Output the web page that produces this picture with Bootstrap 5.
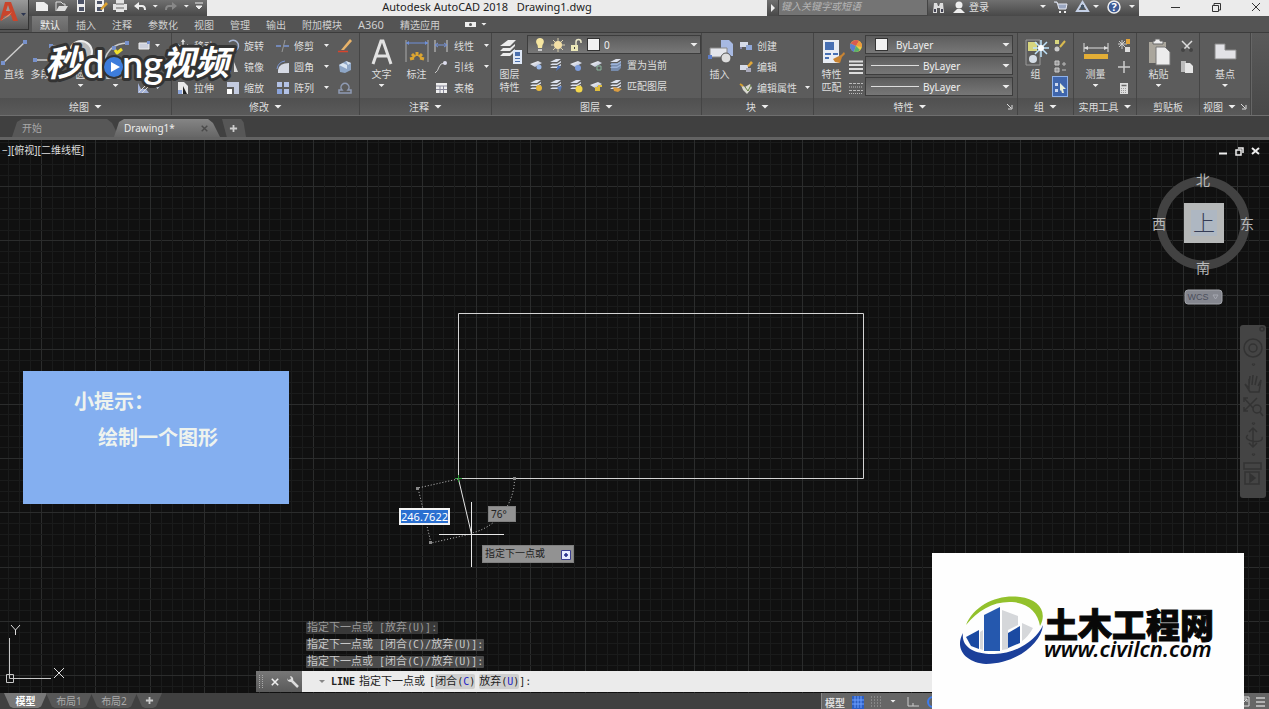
<!DOCTYPE html>
<html lang="zh-CN">
<head>
<meta charset="utf-8">
<meta name="viewport" content="width=device-width, initial-scale=1">
<title>Autodesk AutoCAD 2018 - Drawing1.dwg</title>
<link href="https://cdn.jsdelivr.net/npm/bootstrap@5.3.0/dist/css/bootstrap.min.css" rel="stylesheet">
<style>
  body { font: 10px/16px "Noto Sans", "Noto Sans CJK SC", sans-serif; color: #dedede; background: #404040; overflow: hidden; }
  button, input, select { font: inherit; color: inherit; background: none; border: 0; padding: 0; }
  select { appearance: none; }
  svg { display: block; flex: none; overflow: visible; }
  .ic { width: 14px; height: 14px; }
  .caret { width: 6px; height: 3px; flex: none; background: #eee; clip-path: polygon(0 0, 100% 0, 50% 100%); }
  .caret-lg { width: 8px; height: 4px; }

  /* title bar */
  .chrome { height: 16px; }
  .dark-bar { background: linear-gradient(#707070, #484848); }
  .light-bar { background: #ebebeb; color: #222; }
  .app-title { font-size: 11px; line-height: 13px; white-space: pre; }
  .app-btn { left: 0; top: 0; width: 29px; height: 30px; background: linear-gradient(#9a9a9a, #565656); border: 1px solid #333; border-width: 0 1px 1px 0; z-index: 2; }
  .quick { width: 207px; padding: 0 4px 4px 35px; justify-content: space-between; }
  .search-box { width: 150px; height: 16px; background: #747474; border: 1px solid #444; border-top: 0; padding-left: 2px; }
  .search-box input { font-style: italic; line-height: 12px; height: 12px; width: 100%; display: block; }
  .search-box input::placeholder { color: #b4b4b4; opacity: 1; }
  .account { width: 211px; padding-bottom: 3px; }
  .winctl { width: 130px; padding-bottom: 3px; }

  /* menu */
  .menu { height: 17px; background: #545454; padding-left: 32px; border-bottom: 1px solid #3c3c3c; }
  .menu a { color: #cfcfcf; text-decoration: none; padding: 0 8px; height: 16px; line-height: 18px; }
  .menu a.on { color: #f2f2f2; background: linear-gradient(#7a7a7a, #666); }
  .menu a.latin { font-size: 11px; }

  /* ribbon */
  .ribbon { height: 82px; background: linear-gradient(#5a5a5a, #484848); }
  .pane { border-right: 1px solid #454545; box-shadow: 1px 0 #666; background: #5c5c5c; }
  .pane-body { height: 65px; padding-top: 2px; }
  .pane-name { height: 17px; background: linear-gradient(#505050, #5a5a5a); gap: 5px; line-height: 16px; }
  .big { width: 35px; height: 60px; padding-top: 3px; line-height: 13px; }
  .big svg { margin-bottom: 2px; width: 28px; height: 28px; }
  .big .caret { margin-top: 3px; }
  .big-first { width: 28px; }
  .stack-sm { width: 50px; } .stack-md { width: 60px; } .stack-ic { width: 16px; }
  .inset { padding-left: 2px; }
  .tool { height: 21px; gap: 4px; white-space: nowrap; }
  .tool .caret { margin-left: 6px; width: 5px; }
  .icons { height: 21px; gap: 6px; padding-left: 2px; }
  .combo { height: 19px; border: 1px solid #3d3d3d; background: linear-gradient(#5d5d5d, #777); padding: 0 2px 0 5px; gap: 4px; color: #f0f0f0; }
  .combo-gap { gap: 2px; }
  .chip { width: 13px; height: 13px; background: #f2f2f2; border: 1px solid #333; flex: none; }
  .rule { width: 48px; height: 1px; background: #ddd; flex: none; }
  .w-draw { width: 172px; } .w-mod { width: 188px; } .w-ann { width: 132px; } .w-lay { width: 210px; }
  .w-blk { width: 112px; } .w-prop { width: 204px; } .w-grp { width: 56px; } .w-util { width: 63px; } .w-view { width: 51px; }
  .picked { height: 19px; background: #3f66ad; outline: 1px solid #8fb2ea; }

  /* document tabs */
  .docs { height: 25px; background: #404040; border-top: 1px solid #6e6e6e; border-bottom: 3px solid #636363; padding: 3px 0 0 12px; }
  .doc { height: 18px; line-height: 18px; color: #a8a8a8; background: #575757; padding: 0 12px 0 10px; clip-path: polygon(0 100%, 5px 3px, 10px 0, calc(100% - 12px) 0, calc(100% - 7px) 4px, 100% 100%); }
  .doc.on { color: #eee; background: linear-gradient(#858585, #666); }
  .doc-a { width: 107px; } .doc-b { width: 106px; margin-left: -5px; } .doc-c { width: 24px; margin-left: 2px; padding: 0 7px; clip-path: polygon(0 0, 80% 0, 90% 20%, 100% 100%, 20% 100%); }

  /* drawing area */
  .stage { background: #101010; min-height: 0; }
  .board { left: 0; top: 0; width: 100%; height: 100%; overflow: hidden; }
  .viewlabel { left: 2px; top: 2px; line-height: 16px; }
  .viewctl { right: 9px; top: 7px; gap: 7px; }
  .cube { right: 13px; top: 31px; }
  .navbar-side { right: 3px; top: 185px; width: 26px; height: 173px; background: #444; border-radius: 3px; }
  .tip { left: 23px; top: 231px; width: 266px; height: 133px; background: #84aff0; color: #eef3ee; font-size: 20px; font-weight: 700; line-height: 36px; padding: 13px 0 0 51px; }
  .dyn { font-size: 10px; line-height: 14px; color: #222; background: #929292; border: 1px solid #808080; }
  .dyn-len { left: 399px; top: 368px; width: 51px; height: 17px; border: 2px solid #f4f4f4; background: #2a6fd0; color: #fff; font-size: 11px; line-height: 13px; }
  .dyn-ang { left: 488px; top: 366px; width: 28px; height: 16px; padding-left: 2px; }
  .dyn-msg { left: 482px; top: 405px; width: 92px; height: 18px; padding: 0 2px; }
  .log { left: 306px; bottom: 25px; font-family: "DejaVu Sans Mono", "Noto Sans CJK SC", monospace; gap: 5px; font-size: 11px; line-height: 12px; color: #c8c8c8; }
  .log div { background: #4b4b4b; padding: 0 1px; border-radius: 1px; white-space: pre; }
  .log div:first-child { color: #999; background: #383838; }
  .lat { font-size: 10px; }
  .cmd { left: 256px; right: 25px; bottom: 1px; height: 21px; background: #ebebeb; color: #222; font-family: "DejaVu Sans Mono", "Noto Sans CJK SC", monospace; font-size: 11px; line-height: 20px; }
  .cmd-grip { width: 46px; height: 21px; background: linear-gradient(#777, #5a5a5a); gap: 8px; padding-left: 3px; }
  .cmd .caret { background: #888; margin: 0 6px 0 17px; }
  .cmd button.opt { background: #cfcfcf; line-height: 15px; border-radius: 2px; }
  .cmd b { color: #2222c8; font-weight: 400; }

  /* status bar */
  .status { height: 16px; background: #404040; padding-left: 4px; overflow: hidden; }
  .lay { width: 46px; height: 15px; margin-right: -1px; line-height: 16px; background: #575757; color: #aaa; clip-path: polygon(0 0, 100% 0, calc(100% - 6px) 90%, calc(100% - 9px) 100%, 9px 100%, 6px 90%); }
  .lay.on { background: #787878; color: #fff; font-weight: 700; width: 43px; }
  .lay-add { width: 26px; }
  .state { width: 448px; background: #666; padding-left: 3px; gap: 7px; border-left: 1px solid #888; }

  /* overlays */
  .mark-video { left: 40px; top: 36px; z-index: 5; pointer-events: none; }
  .mark-site { right: 25px; bottom: 0; width: 312px; height: 156px; background: #fefefe; z-index: 5; }
</style>
</head>
<body class="vh-100 d-flex flex-column position-relative">

<svg width="0" height="0" class="position-absolute" aria-hidden="true">
  <defs>
    <linearGradient id="sh" x1="0" y1="0" x2="1" y2="1"><stop offset="0" stop-color="#fff"/><stop offset="1" stop-color="#aeb6cc"/></linearGradient>
    <symbol id="sheet" viewBox="0 0 14 14"><path d="M1 6L9 3L13 5L6 9Z" fill="url(#sh)"/></symbol>
    <symbol id="stack" viewBox="0 0 14 14"><path d="M1 4L7 1H12L8 4Z M1 7L3 5.500H8L12 3V4.500L8 7Z M1 10L3 8.500H8L12 6V7.500L8 10Z" fill="#dde2ee"/></symbol>
    <symbol id="plus" viewBox="0 0 10 10"><path d="M5 1V9M1 5H9" stroke="#ccc" stroke-width="2"/></symbol>
    <symbol id="cross" viewBox="0 0 10 10"><path d="M1 1L9 9M9 1L1 9" stroke="currentColor" stroke-width="2"/></symbol>
    <symbol id="bulb" viewBox="0 0 14 14"><path d="M7 0C3 0 2 4 4.500 7L5 10H9L9.500 7C12 4 11 0 7 0Z" fill="#f6e6a0"/><path d="M5 11H9V13H5Z" fill="#ccc"/></symbol>
    <symbol id="sun" viewBox="0 0 14 14"><path d="M7 0V14M0 7H14M2 2L12 12M12 2L2 12" stroke="#d8cfae"/><circle cx="7" cy="7" r="4" fill="#f3dfa6"/></symbol>
    <symbol id="lock" viewBox="0 0 14 14"><path d="M7 7V4A2.500 2.500 0 0 1 12 4V5" fill="none" stroke="#e9e6c8" stroke-width="1.500"/><path d="M2 7H9V13H2Z" fill="#ece8b8"/><path d="M5 9H6V11H5Z" fill="#444"/></symbol>
    <symbol id="launch" viewBox="0 0 6 6"><path d="M0 0L4 4M5 1V5H1" stroke="#ddd" fill="none"/></symbol>
  </defs>
</svg>

<!-- title bar -->
<header class="chrome d-flex flex-shrink-0">
  <button class="app-btn position-absolute" aria-label="应用程序菜单">
    <svg width="28" height="26" viewBox="0 0 28 26"><path d="M0 18L5 0H11L18 19H13L11 13L4 14L2 19Z" fill="#c9452c"/><path d="M6 9L8 3L10 9Z" fill="#999"/><path d="M0 19L12 10L9 14Z" fill="#f08a68"/><path d="M21 11H26L23.500 14Z" fill="#2c3550"/></svg>
  </button>
  <div class="quick dark-bar d-flex align-items-center">
    <button aria-label="新建"><svg class="ic" viewBox="0 0 14 14"><path d="M1 3H9L13 6V12H1Z" fill="#eee"/></svg></button>
    <button aria-label="打开"><svg class="ic" viewBox="0 0 14 14"><path d="M1 12V3H6L8 5H10V7" fill="none" stroke="#ddd"/><path d="M1 12L4 7H13L10 12Z" fill="#ddd"/></svg></button>
    <button aria-label="保存"><svg class="ic" viewBox="0 0 14 14"><path d="M3 1H11V13H3Z" fill="#eee"/><path d="M4 1H10V5H4ZM5 8H10V12H5Z" fill="#4c5368"/></svg></button>
    <button aria-label="另存为"><svg class="ic" viewBox="0 0 14 14"><path d="M1 1H10V13H1Z" fill="#eee"/><path d="M3 2H8V5H3ZM3 8H8V12H3Z" fill="#4c5368"/><path d="M6 10L12 3L14 5L8 11Z" fill="#d9a030"/></svg></button>
    <button aria-label="打印"><svg class="ic" viewBox="0 0 14 14"><path d="M3 1H11V5H14V11H11V13H3V11H0V5H3Z" fill="#e4e4e4"/><path d="M3 5H11M3 9H11" stroke="#666"/></svg></button>
    <button aria-label="放弃"><svg class="ic" viewBox="0 0 14 14"><path d="M2 7H9Q12 7 12 11" fill="none" stroke="#eee" stroke-width="2"/><path d="M1 7L6 3V11Z" fill="#eee"/></svg></button>
    <span class="caret"></span>
    <button aria-label="重做"><svg class="ic" viewBox="0 0 14 14"><path d="M12 7H5Q2 7 2 11" fill="none" stroke="#888" stroke-width="2"/><path d="M13 7L8 3V11Z" fill="#888"/></svg></button>
    <span class="caret"></span>
    <svg width="8" height="8" viewBox="0 0 8 8"><path d="M0 1H8M1 4H7L4 7Z" stroke="#eee" fill="#eee"/></svg>
  </div>
  <div class="light-bar app-title flex-grow-1 text-center">Autodesk AutoCAD 2018   Drawing1.dwg</div>
  <div class="dark-bar d-flex align-items-center ps-1"><svg width="7" height="8" viewBox="0 0 7 8"><path d="M0 0L4 4L0 8Z" fill="#eee"/></svg>
    <div class="search-box"><input type="text" aria-label="搜索" placeholder="键入关键字或短语"></div></div>
  <div class="account dark-bar d-flex align-items-center ps-1">
    <svg width="13" height="14" viewBox="0 0 13 14"><path d="M1 13L2 3H5L6 6H7L8 3H11L12 13H8V8H5V13Z" fill="#ddd"/><path d="M2 9H4V12H2ZM9 9H11V12H9Z" fill="#445"/></svg>
    <svg class="ms-2" width="12" height="14" viewBox="0 0 12 14"><circle cx="6" cy="5" r="3.500" fill="#eee"/><path d="M0 13L4 9H8L12 13Z" fill="#eee"/></svg>
    <button class="ms-1">登录</button>
    <span class="caret ms-auto"></span>
    <svg class="ms-2" width="14" height="14" viewBox="0 0 14 14"><path d="M0 2H3L5 9H12L13 4H4" fill="#9aa6c0" stroke="#e6e9f2"/><path d="M5 11H7V13H5ZM10 11H12V13H10Z" fill="#eee"/></svg>
    <svg class="ms-2" width="13" height="12" viewBox="0 0 13 12"><path d="M6.500 1L1 10H12Z" fill="none" stroke="#c4d0e6" stroke-width="2"/><path d="M5 4H8V8H5Z" fill="#456"/></svg>
    <span class="caret ms-1"></span>
    <svg class="ms-2" width="14" height="14" viewBox="0 0 14 14"><circle cx="7" cy="7" r="6" fill="#3c5a96" stroke="#eee" stroke-width="1.500"/><text x="7" y="11" font-size="11" font-weight="700" fill="#fff" text-anchor="middle">?</text></svg>
    <span class="caret ms-2 me-1"></span>
  </div>
  <div class="winctl light-bar d-flex align-items-center justify-content-between ps-4 pe-1">
    <button class="ps-2" aria-label="最小化"><svg width="10" height="10" viewBox="0 0 10 10"><path d="M0 5.500H9" stroke="#333"/></svg></button>
    <button aria-label="还原"><svg width="10" height="10" viewBox="0 0 10 10"><path d="M1.500 3.500H7.500V9.500H1.500ZM3 3V1.500H9.500V8H8" fill="none" stroke="#333"/></svg></button>
    <button class="pe-1" aria-label="关闭"><svg width="10" height="10" viewBox="0 0 10 10"><path d="M1 1L9 9M9 1L1 9" stroke="#333"/></svg></button>
  </div>
</header>

<nav class="menu d-flex flex-shrink-0 align-items-start">
  <a href="#" class="on">默认</a><a href="#">插入</a><a href="#">注释</a><a href="#">参数化</a><a href="#">视图</a><a href="#">管理</a><a href="#">输出</a><a href="#">附加模块</a><a href="#" class="latin">A360</a><a href="#">精选应用</a>
  <span class="d-flex align-items-center gap-1 ms-3 mt-1"><svg width="13" height="8" viewBox="0 0 13 8"><path d="M1 2H12V7H1Z" fill="#eee"/><circle cx="6.500" cy="4.500" r="1.500" fill="#555"/></svg><span class="caret"></span></span>
</nav>

<!-- ribbon -->
<section class="ribbon d-flex flex-shrink-0">
  <div class="pane w-draw">
    <div class="pane-body d-flex">
      <button class="big big-first d-flex flex-column align-items-center"><svg viewBox="0 0 28 28"><path d="M3 25L25 4" stroke="#ccc" stroke-width="1.500"/><path d="M1 23H5V27H1ZM23 2H27V6H23Z" fill="#7892cc"/></svg>直线</button>
      <button class="big d-flex flex-column align-items-center"><svg viewBox="0 0 28 28"><path d="M3 22H20L24 8H19" fill="none" stroke="#ccc" stroke-width="1.500"/><path d="M1 20H5V24H1ZM17 6H21V10H17Z" fill="#7892cc"/></svg>多段线</button>
      <button class="big d-flex flex-column align-items-center"><svg viewBox="0 0 28 28"><circle cx="14" cy="14" r="11" fill="#bbb" stroke="#eee" stroke-width="2"/></svg>圆<span class="caret"></span></button>
      <button class="big d-flex flex-column align-items-center"><svg viewBox="0 0 28 28"><path d="M2 24Q6 6 25 5" fill="none" stroke="#ccc" stroke-width="1.500"/><path d="M23 3H27V7H23ZM10 8H14V12H10Z" fill="#7892cc"/></svg>圆弧<span class="caret"></span></button>
      <div class="ms-1">
        <button class="tool d-flex align-items-center" aria-label="矩形"><svg class="ic" viewBox="0 0 14 14"><path d="M2 4H12V10H2Z" fill="#ccd0dd" stroke="#eee"/><path d="M10 2H13V5H10Z" fill="#7892cc"/></svg><span class="caret ms-0"></span></button>
        <button class="tool d-flex align-items-center" aria-label="椭圆"><svg class="ic" viewBox="0 0 14 14"><ellipse cx="7" cy="7" rx="6" ry="3" fill="none" stroke="#ddd"/></svg><span class="caret ms-0"></span></button>
        <button class="tool d-flex align-items-center" aria-label="图案填充"><svg class="ic" viewBox="0 0 14 14"><path d="M1 2V12H12L9 8H4Z" fill="#a3b2d8"/><path d="M2 11L9 4M5 12L12 5" stroke="#ddd"/></svg><span class="caret ms-0"></span></button>
      </div>
    </div>
    <div class="pane-name d-flex align-items-center justify-content-center">绘图<span class="caret caret-lg"></span></div>
  </div>
  <div class="pane w-mod">
    <div class="pane-body d-flex ps-1">
      <div class="stack-sm">
        <button class="tool d-flex align-items-center"><svg class="ic" viewBox="0 0 14 14"><path d="M7 1V13M1 7H13" stroke="#ddd" stroke-width="1.500"/><path d="M5 3L7 0L9 3ZM5 11L7 14L9 11ZM3 5L0 7L3 9ZM11 5L14 7L11 9Z" fill="#ddd"/></svg>移动</button>
        <button class="tool d-flex align-items-center"><svg class="ic" viewBox="0 0 14 14"><circle cx="5" cy="5" r="3.500" fill="none" stroke="#ddd"/><circle cx="9" cy="9" r="3.500" fill="none" stroke="#8fa8dd"/></svg>复制</button>
        <button class="tool d-flex align-items-center"><svg class="ic" viewBox="0 0 14 14"><path d="M2 1H8L12 5V13H2Z" fill="#e8e8e8"/><path d="M7 5V13H11Z" fill="#222"/><path d="M2 9H6V13H2Z" fill="#8fa8dd"/></svg>拉伸</button>
      </div>
      <div class="stack-sm">
        <button class="tool d-flex align-items-center"><svg class="ic" viewBox="0 0 14 14"><path d="M3 3A5.500 5.500 0 1 1 2 9" fill="none" stroke="#a9b7d6" stroke-width="1.500"/></svg>旋转</button>
        <button class="tool d-flex align-items-center"><svg class="ic" viewBox="0 0 14 14"><path d="M1 12L5 2V12Z" fill="#8fa8dd"/><path d="M8 12V2L12 12Z" fill="#ddd"/></svg>镜像</button>
        <button class="tool d-flex align-items-center"><svg class="ic" viewBox="0 0 14 14"><path d="M1 1H13V13H8V6H1Z" fill="#c3cbe0"/><path d="M1 8H6V13H1Z" fill="#fff"/></svg>缩放</button>
      </div>
      <div class="stack-md">
        <button class="tool d-flex align-items-center"><svg class="ic" viewBox="0 0 14 14"><path d="M0 7H5M8 7H13" stroke="#7b97d5" stroke-width="1.500"/><path d="M9 1L6 13" stroke="#999"/></svg>修剪<span class="caret"></span></button>
        <button class="tool d-flex align-items-center"><svg class="ic" viewBox="0 0 14 14"><path d="M2 13V10Q3 3 13 3V13Z" fill="#d6dae4"/><path d="M1 9Q2 2 9 1" stroke="#7b97d5" fill="none"/></svg>圆角<span class="caret"></span></button>
        <button class="tool d-flex align-items-center"><svg class="ic" viewBox="0 0 14 14"><path d="M1 1H6V6H1ZM8 1H13V6H8ZM8 8H13V13H8Z" fill="#b3c2e6"/><path d="M1 8H6V13H1Z" fill="#8ba4dc"/></svg>阵列<span class="caret"></span></button>
      </div>
      <div class="inset">
        <button class="tool d-flex align-items-center" aria-label="删除"><svg class="ic" viewBox="0 0 14 14"><path d="M0 12.500H10" stroke="#d8442c" stroke-width="1.500"/><path d="M3 11L12 0L14 2L6 11Z" fill="#e8b36a"/></svg></button>
        <button class="tool d-flex align-items-center" aria-label="分解"><svg class="ic" viewBox="0 0 14 14"><path d="M1 5L8 1L13 3V10L7 13L2 12Z" fill="#8ea6c6"/><path d="M1 5L5 3L9 5V9L5 7ZM8 1L13 3L10 5Z" fill="#d9e4f0"/></svg></button>
        <button class="tool d-flex align-items-center" aria-label="偏移"><svg class="ic" viewBox="0 0 14 14"><path d="M1 12H13V9H10A4 4 0 1 0 4 9H1Z" fill="none" stroke="#8f9bb4" stroke-width="1.500"/></svg></button>
      </div>
    </div>
    <div class="pane-name d-flex align-items-center justify-content-center">修改<span class="caret caret-lg"></span></div>
  </div>
  <div class="pane w-ann">
    <div class="pane-body d-flex ps-1">
      <button class="big d-flex flex-column align-items-center"><svg viewBox="0 0 28 28"><path d="M5 26L13 3H15L23 26M8 18H20" fill="none" stroke="#e2e2e2" stroke-width="3"/></svg>文字<span class="caret"></span></button>
      <button class="big d-flex flex-column align-items-center"><svg viewBox="0 0 28 28"><path d="M3 2V24M25 2V24" stroke="#aaa"/><path d="M3 5H25" stroke="#6f8fd8"/><path d="M3 5L6 3V7ZM25 5L22 3V7Z" fill="#6f8fd8"/><path d="M7 21L11 20M9 16L12 19M14 14V18M19 16L16 19M21 21L17 20" stroke="#dca530" stroke-width="3"/></svg>标注</button>
      <div>
        <button class="tool d-flex align-items-center"><svg class="ic" viewBox="0 0 14 14"><path d="M1 1V13M13 1V13" stroke="#ccc"/><path d="M1 6H13M4 4L1 6L4 8M10 4L13 6L10 8" stroke="#7995d8" fill="none"/></svg><span class="inset">线性</span><span class="caret"></span></button>
        <button class="tool d-flex align-items-center"><svg class="ic" viewBox="0 0 14 14"><path d="M1 13Q4 11 5 7T11 3" fill="none" stroke="#ccc"/><circle cx="11" cy="3" r="2" fill="#dde"/></svg><span class="inset">引线</span><span class="caret"></span></button>
        <button class="tool d-flex align-items-center"><svg class="ic" viewBox="0 0 14 14"><path d="M2 2H13V12H2Z" fill="#eee"/><path d="M2 5H13M2 8.500H13M6 5V12M9.500 5V12" stroke="#889"/></svg><span class="inset">表格</span></button>
      </div>
    </div>
    <div class="pane-name d-flex align-items-center justify-content-center">注释<span class="caret caret-lg"></span></div>
  </div>
  <div class="pane w-lay">
    <div class="pane-body d-flex">
      <button class="big d-flex flex-column align-items-center"><svg viewBox="0 0 28 28"><path d="M4 8L12 2H20L14 8ZM4 13L7 10H14L19 6V8L14 13ZM4 18L7 15H14L19 11V13L14 18Z" fill="#ececec"/><path d="M17 12H26V26H17Z" fill="#dfe8f6"/><path d="M19 14H24V18H19ZM19 20H24V21H19ZM19 23H24V24H19Z" fill="#4b70ae"/></svg><span>图层<br>特性</span></button>
      <div class="flex-grow-1">
        <div class="combo d-flex align-items-center"><svg class="ic" viewBox="0 0 14 14"><use href="#bulb"/></svg><svg class="ic" viewBox="0 0 14 14"><use href="#sun"/></svg><svg class="ic" viewBox="0 0 14 14"><use href="#lock"/></svg><span class="chip"></span><select class="flex-grow-1" aria-label="图层"><option>0</option></select><span class="caret caret-lg"></span></div>
        <div class="icons d-flex align-items-center">
          <svg class="ic" viewBox="0 0 14 14"><use href="#sheet"/><circle cx="10" cy="9" r="2.500" fill="#9bb8e8"/></svg>
          <svg class="ic" viewBox="0 0 14 14"><use href="#stack"/><path d="M9 7L12 9L7 13Z" fill="#4f74bb"/></svg>
          <svg class="ic" viewBox="0 0 14 14"><use href="#sheet"/><circle cx="9" cy="10" r="3" fill="#7d9cda"/></svg>
          <svg class="ic" viewBox="0 0 14 14"><use href="#sheet"/><path d="M8 8H12V12H8Z" fill="none" stroke="#8ab59c"/></svg>
          <button class="tool d-flex align-items-center"><svg class="ic" viewBox="0 0 14 14"><use href="#stack"/><path d="M2 5H9L12 3V10L9 13H2Z" fill="#819fce" opacity=".7"/></svg>置为当前</button>
        </div>
        <div class="icons d-flex align-items-center">
          <svg class="ic" viewBox="0 0 14 14"><use href="#stack"/><circle cx="10" cy="9" r="3" fill="#e6b83e"/></svg>
          <svg class="ic" viewBox="0 0 14 14"><use href="#stack"/><path d="M8 8L13 7L11 13Z" fill="#5578b8"/></svg>
          <svg class="ic" viewBox="0 0 14 14"><use href="#stack"/><circle cx="10" cy="10" r="3.500" fill="#f2d64c"/></svg>
          <svg class="ic" viewBox="0 0 14 14"><use href="#sheet"/><path d="M6 8H9V6H13V8H11V12H6Z" fill="#dfbd3e"/></svg>
          <button class="tool d-flex align-items-center"><svg class="ic" viewBox="0 0 14 14"><use href="#stack"/><path d="M4 8L13 10L9 13L5 12Z" fill="#d99c42"/></svg>匹配图层</button>
        </div>
      </div>
    </div>
    <div class="pane-name d-flex align-items-center justify-content-center">图层<span class="caret caret-lg"></span></div>
  </div>
  <div class="pane w-blk">
    <div class="pane-body d-flex">
      <button class="big d-flex flex-column align-items-center"><svg viewBox="0 0 28 28"><path d="M15 2H23L27 6V18H15Z" fill="#a7b9e2"/><path d="M4 10H21V19H4Z" fill="#e4e6ec" stroke="#888"/><circle cx="20" cy="20" r="5" fill="#ddd" stroke="#555"/><path d="M2 17H6V21H2Z" fill="#5f7ec8"/></svg>插入</button>
      <div class="inset">
        <button class="tool d-flex align-items-center"><svg class="ic" viewBox="0 0 14 14"><path d="M1 3H9V8H1Z" fill="#d6dbe8"/><path d="M7 6H13V11H7Z" fill="#91a8d8"/><path d="M1 8H3V10H1Z" fill="#88a"/></svg>创建</button>
        <button class="tool d-flex align-items-center"><svg class="ic" viewBox="0 0 14 14"><path d="M1 5H9V10H1Z" fill="#d6dbe8"/><path d="M7 8H12V12H7Z" fill="#aab"/><path d="M8 6L12 1L14 3L10 7Z" fill="#e2a93a"/></svg>编辑</button>
        <button class="tool d-flex align-items-center"><svg class="ic" viewBox="0 0 14 14"><path d="M2 4L6 6L11 3L13 7L8 13L4 9Z" fill="#d8d8d0"/><path d="M6 6L9 10L12 4" stroke="#65803e" fill="none"/><path d="M1 3L4 5" stroke="#d4a030" stroke-width="2"/></svg>编辑属性<span class="caret ms-1"></span></button>
      </div>
    </div>
    <div class="pane-name d-flex align-items-center justify-content-center">块<span class="caret caret-lg"></span></div>
  </div>
  <div class="pane w-prop">
    <div class="pane-body d-flex">
      <button class="big d-flex flex-column align-items-center"><svg viewBox="0 0 28 28"><path d="M5 2H21V25H5Z" fill="#e9edf4"/><path d="M7 4H16V12H7Z" fill="#4770b4"/><path d="M7 16H13M7 20H11M15 16H20" stroke="#4770b4" stroke-width="2"/><path d="M15 21L23 17L26 14L27 16L24 19L22 25L17 24Z" fill="#c98432"/></svg><span>特性<br>匹配</span></button>
      <div class="stack-ic">
        <div class="tool d-flex align-items-center"><svg class="ic" viewBox="0 0 14 14"><circle cx="7" cy="7" r="6" fill="#e8d048"/><path d="M7 7L1.500 4.500A6 6 0 0 1 10 2Z" fill="#d85b52"/><path d="M7 7L10 2A6 6 0 0 1 13 8Z" fill="#ee9b3c"/><path d="M7 7L1.500 4.500A6 6 0 0 0 5 12.700Z" fill="#597fd0"/><path d="M7 7L5 12.700A6 6 0 0 0 11 11Z" fill="#58b06a"/></svg></div>
        <div class="tool d-flex align-items-center"><svg class="ic" viewBox="0 0 14 14"><path d="M0 1.500H14M0 5H14M0 9H14M0 13H14" stroke="#ddd" stroke-width="2"/></svg></div>
        <div class="tool d-flex align-items-center"><svg class="ic" viewBox="0 0 14 14"><path d="M0 2.500H14M0 9.500H14" stroke="#bbb" stroke-dasharray="3 1"/><path d="M0 6H14M0 12.500H14" stroke="#bbb" stroke-dasharray="1 1"/></svg></div>
      </div>
      <div class="combo-gap flex-grow-1 d-flex flex-column pe-1">
        <div class="combo d-flex align-items-center"><span class="chip ms-1 me-1"></span><select class="flex-grow-1" aria-label="对象颜色"><option>ByLayer</option></select><span class="caret caret-lg"></span></div>
        <div class="combo d-flex align-items-center"><span class="rule"></span><select class="flex-grow-1" aria-label="线宽"><option>ByLayer</option></select><span class="caret caret-lg"></span></div>
        <div class="combo d-flex align-items-center"><span class="rule"></span><select class="flex-grow-1" aria-label="线型"><option>ByLayer</option></select><span class="caret caret-lg"></span></div>
      </div>
    </div>
    <div class="pane-name d-flex align-items-center px-1"><span class="pane-name bg-transparent flex-grow-1 d-flex align-items-center justify-content-center">特性<span class="caret caret-lg"></span></span><svg width="6" height="6"><use href="#launch"/></svg></div>
  </div>
  <div class="pane w-grp">
    <div class="pane-body d-flex">
      <button class="big d-flex flex-column align-items-center"><svg viewBox="0 0 28 28"><path d="M4 2H18V27H4Z" fill="none" stroke="#999"/><path d="M6 4H15V13H6Z" fill="#d8d67e"/><circle cx="11" cy="21" r="4" fill="#d5dde6"/><path d="M19 2V19M11 10H27M13 4L25 16M25 4L13 16" stroke="#bfe3fb" stroke-width="1.500"/><circle cx="19" cy="10" r="3" fill="#fff"/></svg>组</button>
      <div>
        <button class="tool d-flex align-items-center" aria-label="编辑组"><svg class="ic" viewBox="0 0 14 14"><path d="M2 1H6V5H2Z" fill="#d8d67e"/><circle cx="4" cy="10" r="2.500" fill="#ccc"/><path d="M7 8L12 2" stroke="#d9ba50" stroke-width="2"/></svg></button>
        <button class="tool d-flex align-items-center" aria-label="解除编组"><svg class="ic" viewBox="0 0 14 14"><path d="M2 1H6V5H2ZM2 8H6V12H2Z" fill="#999" stroke="#ccc"/><path d="M9 4H13M11 2V6M9 10H13" stroke="#bbb"/></svg></button>
        <button class="tool picked d-flex align-items-center px-0" aria-label="组选择"><svg class="ic" viewBox="0 0 14 14"><path d="M2 3H5V6H2ZM2 9H5V12H2Z" fill="#ccd8ee"/><path d="M7 3L13 9L10 9L11 13L9 13L8 10L7 11Z" fill="#e9f0d8"/></svg></button>
      </div>
    </div>
    <div class="pane-name d-flex align-items-center justify-content-center">组<span class="caret caret-lg"></span></div>
  </div>
  <div class="pane w-util">
    <div class="pane-body d-flex ps-1">
      <button class="big d-flex flex-column align-items-center"><svg viewBox="0 0 28 28"><path d="M2 5V14M26 5V14M2 10H26" stroke="#ddd"/><path d="M2 10L6 8V12ZM26 10L22 8V12Z" fill="#ddd"/><path d="M2 16H26V21H2Z" fill="#e3ae36"/></svg>测量<span class="caret"></span></button>
      <div class="ps-1">
        <button class="tool d-flex align-items-center" aria-label="快速选择"><svg class="ic" viewBox="0 0 14 14"><path d="M5 1V10M1 5H10M2 2L8 8M8 2L2 8" stroke="#ccc"/><path d="M9 0H13V5H9Z" fill="#e0a43c"/><path d="M8 8H13V13H8Z" fill="#ddd"/></svg></button>
        <button class="tool d-flex align-items-center" aria-label="点样式"><svg class="ic" viewBox="0 0 14 14"><path d="M7 1V13M1 7H13" stroke="#ccc" stroke-width="1.500"/></svg></button>
        <button class="tool d-flex align-items-center" aria-label="计算器"><svg class="ic" viewBox="0 0 14 14"><path d="M3 2H11V13H3Z" fill="#ddd"/><path d="M4.500 4.500H9.500" stroke="#666" stroke-width="1.500"/><path d="M4 7.500H10M4 9.500H10M4 11.500H10" stroke="#999" stroke-dasharray="1 1"/></svg></button>
      </div>
    </div>
    <div class="pane-name d-flex align-items-center justify-content-center">实用工具<span class="caret caret-lg"></span></div>
  </div>
  <div class="pane w-util">
    <div class="pane-body d-flex ps-1">
      <button class="big d-flex flex-column align-items-center"><svg viewBox="0 0 28 28"><path d="M4 4H21V25H4Z" fill="#aaa69c"/><path d="M8 3H10V1H15V3H18V6H8Z" fill="#ececec" stroke="#666"/><path d="M11 9H20L25 14V27H11Z" fill="#ececec" stroke="#777"/></svg>粘贴<span class="caret"></span></button>
      <div class="ps-1">
        <button class="tool d-flex align-items-center" aria-label="剪切"><svg class="ic" viewBox="0 0 14 14"><path d="M2 2L10 10M12 2L4 10" stroke="#ddd" stroke-width="1.500"/><circle cx="3" cy="11" r="2" fill="#444"/><circle cx="11" cy="11" r="2" fill="#444"/></svg></button>
        <button class="tool d-flex align-items-center" aria-label="复制剪裁"><svg class="ic" viewBox="0 0 14 14"><path d="M1 1H6V12H1Z" fill="#bbb"/><path d="M5 3H10L13 6V13H5Z" fill="#e6e6e6"/></svg></button>
      </div>
    </div>
    <div class="pane-name d-flex align-items-center justify-content-center">剪贴板</div>
  </div>
  <div class="pane w-view">
    <div class="pane-body d-flex justify-content-center">
      <button class="big d-flex flex-column align-items-center"><svg viewBox="0 0 28 28"><path d="M4 6H14V12H25V21H4Z" fill="#e2e2e6" stroke="#888"/></svg>基点<span class="caret"></span></button>
    </div>
    <div class="pane-name d-flex align-items-center justify-content-center">视图<span class="caret caret-lg"></span><svg width="6" height="6"><use href="#launch"/></svg></div>
  </div>
</section>

<!-- document tabs -->
<div class="docs d-flex flex-shrink-0">
  <button class="doc doc-a text-start">开始</button>
  <button class="doc doc-b on d-flex align-items-center justify-content-between">Drawing1*<svg width="7" height="7" viewBox="0 0 10 10" color="#4a4a4a"><use href="#cross"/></svg></button>
  <button class="doc doc-c" aria-label="新图形"><svg width="9" height="9"><use href="#plus"/></svg></button>
</div>

<!-- drawing area -->
<main class="stage flex-grow-1 position-relative">
  <svg class="board position-absolute" id="board">
    <g id="grid"></g>
    <g transform="translate(0 -140)" fill="none">
      <path d="M458.500 479V313.500H863.500V478.500H458.500" stroke="#d4d4d4"/>
      <path d="M458.500 479L471.500 534" stroke="#e4e4e4"/>
      <path d="M455 478.500H462M458.500 475V482" stroke="#2f9a3a"/>
      <path d="M458 479L418 488L431 543L471 534" stroke="#c4c4c4" stroke-dasharray="1 2"/>
      <path d="M514.500 479A56 56 0 0 1 472 533" stroke="#d4d4d4" stroke-dasharray="1 2"/>
      <path d="M416 487H419V490H416ZM429 541H432V544H429ZM513 477H516V480H513Z" fill="#888"/>
      <path d="M439 534.500H504M471.500 502V567" stroke="#e8e8e8"/>
      <path d="M9.500 638V678.500H51M6.500 674.500H13.500V682.500H6.500Z" stroke="#c8c8c8"/>
      <path d="M11 625L15.500 630L20 625M15.500 630V635M54 668L64 678M64 668L54 678" stroke="#ddd"/>
    </g>
  </svg>
  <div class="viewlabel position-absolute">−][俯视][二维线框]</div>
  <div class="viewctl position-absolute d-flex">
    <svg width="9" height="9" viewBox="0 0 9 9"><path d="M0 6.500H8" stroke="#eee" stroke-width="2"/></svg>
    <svg width="9" height="9" viewBox="0 0 9 9"><path d="M1 3H6V8H1ZM3 1H8V6" fill="none" stroke="#eee" stroke-width="1.500"/></svg>
    <svg width="9" height="9" viewBox="0 0 9 9"><path d="M1 1L8 7M8 1L1 7" stroke="#eee" stroke-width="2"/></svg>
  </div>
  <svg class="cube position-absolute" width="104" height="136" viewBox="0 0 104 136" font-family="Noto Sans CJK SC, sans-serif" font-size="14" fill="#b8b8b8" text-anchor="middle">
    <circle cx="51" cy="52" r="42" fill="none" stroke="#424242" stroke-width="9"/>
    <path d="M32 32H72V72H32Z" fill="#b6b8b8"/><path d="M39 39H65V65H39Z" fill="#aeb7c2"/>
    <text x="52" y="60" font-size="22" font-weight="300" fill="#353c55">上</text>
    <text x="51" y="14">北</text><text x="51" y="102">南</text><text x="7" y="58">西</text><text x="95" y="58">东</text>
    <path d="M36 119H67Q70 119 70 122V130Q70 133 67 133H36Q33 133 33 130V122Q33 119 36 119Z" fill="#85878f" stroke="#a2a4aa"/>
    <text x="46" y="129" font-size="9" fill="#4b4e5c" font-family="Liberation Sans, sans-serif">WCS</text>
    <path d="M61 124H66L63.500 128Z" fill="none" stroke="#a5a7b0"/>
  </svg>
  <div class="navbar-side position-absolute">
    <svg width="26" height="173" viewBox="0 0 26 173" fill="none" stroke="#333" stroke-width="1.500">
      <circle cx="22" cy="4" r="2"/><circle cx="13" cy="23" r="9"/><circle cx="13" cy="23" r="4"/>
      <path d="M12 39H15L13.500 41ZM12 98H15L13.500 100ZM12 129H15L13.500 131Z" stroke-width="1"/>
      <path d="M5 59L9 63V54M9 60L10 51M12 60L13 50M15 60L17 51M18 61L21 55L19 67H10L5 59"/>
      <path d="M4 73L13 83M17 73L4 86M4 77V73H8M4 82V86H8"/><circle cx="17" cy="84" r="4"/><path d="M20 87L23 91"/>
      <path d="M13 104V121M9 107L13 103L17 107M9 118L13 122L17 118M8 110C0 116 25 120 22 112"/>
      <path d="M4 138H21V144H4ZM5 147H19V159H5Z"/><path d="M10 149L15 153L10 157Z" fill="#333"/>
    </svg>
  </div>
  <div class="tip position-absolute"><div>小提示：</div><div class="ps-4">绘制一个图形</div></div>
  <input class="dyn-len position-absolute" aria-label="长度" value="246.7622">
  <div class="dyn dyn-ang position-absolute">76°</div>
  <div class="dyn dyn-msg position-absolute d-flex justify-content-between">指定下一点或<svg class="mt-1" width="10" height="10" viewBox="0 0 10 10"><path d="M.5 .5H9.500V9.500H.5Z" fill="#e7eaff" stroke="#3b3f90"/><path d="M5 3V7M3 5H7" stroke="#222a88" stroke-width="1.500"/></svg></div>
  <div class="log position-absolute d-flex flex-column align-items-start">
    <div>指定下一点或<span class="lat"> [</span>放弃<span class="lat">(U)]:</span></div>
    <div>指定下一点或<span class="lat"> [</span>闭合<span class="lat">(C)/</span>放弃<span class="lat">(U)]:</span></div>
    <div>指定下一点或<span class="lat"> [</span>闭合<span class="lat">(C)/</span>放弃<span class="lat">(U)]:</span></div>
  </div>
  <div class="cmd position-absolute d-flex align-items-center">
    <div class="cmd-grip d-flex align-items-center">
      <svg width="4" height="14" viewBox="0 0 4 14"><path d="M.5 0V14M3.500 0V14" stroke="#aaa" stroke-dasharray="1 1"/></svg>
      <svg width="8" height="8" viewBox="0 0 10 10" color="#eee"><use href="#cross"/></svg>
      <svg width="12" height="12" viewBox="0 0 12 12"><path d="M4 4L11 11" stroke="#ddd" stroke-width="2.500"/><path d="M3 0L4 3L1 4L0 2Q0 6 4 6Q7 5 6 2Q5 0 3 0Z" fill="#ddd"/></svg>
    </div>
    <span class="caret"></span>
    <strong class="lat">LINE</strong><span class="ms-1">指定下一点或</span><span class="lat ms-1">[</span>
    <button class="opt">闭合<span class="lat">(<b>C</b>)</span></button>
    <button class="opt ms-1">放弃<span class="lat">(<b>U</b>)</span></button><span class="lat">]:</span>
  </div>
</main>

<!-- status bar -->
<footer class="status d-flex justify-content-between flex-shrink-0">
  <div class="d-flex">
    <button class="lay on">模型</button><button class="lay">布局1</button><button class="lay">布局2</button>
    <button class="lay lay-add d-flex justify-content-center align-items-center" aria-label="新建布局"><svg width="9" height="9" viewBox="0 0 10 10"><use href="#plus"/></svg></button>
  </div>
  <div class="state d-flex align-items-center">
    <button class="fw-bold pt-1">模型</button>
    <svg width="12" height="14" viewBox="0 0 12 14"><path d="M0 2H12V16H0Z" fill="#2c5fc4"/><path d="M3 2V14M6 2V14M9 2V14M0 6H12M0 10H12" stroke="#6fa0ff"/></svg>
    <svg width="12" height="12" viewBox="0 0 12 12"><path d="M0 2H12M0 5H12M0 8H12M0 11H12" stroke="#aaa" stroke-dasharray="1 2"/></svg>
    <span class="caret"></span>
    <svg class="ms-1" width="13" height="12" viewBox="0 0 13 12"><path d="M1 2V11H12M6 8V11" stroke="#ccc" fill="none"/></svg>
    <svg width="12" height="12" viewBox="0 0 12 12"><circle cx="6" cy="7" r="5" fill="none" stroke="#3c7cf0" stroke-width="2"/></svg>
    <svg class="ms-auto me-1" width="24" height="12" viewBox="0 0 24 12"><path d="M0 2H8V11H0ZM2 8L6 4M3 4H6V7" stroke="#ddd" fill="none"/><path d="M15 3H24M15 7H24M15 11H24" stroke="#ccc" stroke-width="1.500"/></svg>
  </div>
</footer>

<!-- video watermark -->
<svg class="mark-video position-absolute" width="200" height="56" viewBox="0 0 200 56" font-family="Noto Sans CJK SC, sans-serif" font-weight="700" fill="#fff" stroke="#333" stroke-width="6" stroke-linejoin="round" paint-order="stroke">
  <text x="5" y="40" font-size="36" font-style="italic">秒</text>
  <text x="43" y="42" font-size="38" font-family="Lato, sans-serif" font-weight="600">d</text>
  <circle cx="74" cy="31" r="10" fill="#3e7ddb" stroke="#333" stroke-width="4"/>
  <text x="82" y="42" font-size="38" font-family="Lato, sans-serif" font-weight="600">ng</text>
  <text x="121" y="39" font-size="34" font-style="italic">视频</text>
  <circle cx="74" cy="31" r="9" fill="#3e7ddb" stroke="none"/>
  <path d="M71 26L80 31L71 36Z" stroke="none"/>
  <path d="M75 14L77 17L82 13" fill="none" stroke="#f0e02c" stroke-width="3"/>
</svg>

<!-- site logo -->
<svg class="mark-site position-absolute" viewBox="0 0 312 156" font-family="Noto Sans CJK SC, sans-serif" fill="#080808">
  <path d="M34 72C42 52 66 41 88 44C106 46 116 58 108 73C106 60 97 50 80 49C62 48 46 57 34 72Z" fill="#93c12c"/>
  <path d="M31 80C22 96 34 110 54 111C82 111 109 92 111 72C104 88 82 102 60 101C42 101 29 94 31 80Z" fill="#1b3f9a"/>
  <path d="M34 84L47 77V96L39 93Z" fill="#1b4aa2"/>
  <path d="M52 62L68 54V98H52Z" fill="#2558ae"/>
  <path d="M70 57L86 63V72L76 77V96L70 97ZM90 70L101 75Q96 84 90 88ZM48 79L51 77V97L48 96Z" fill="#d5d7da"/>
  <path d="M76 80L88 73V90L76 95Z" fill="#1b4aa2"/>
  <text x="112" y="85" font-size="34" font-weight="900" stroke="#080808">土木工程网</text>
  <text x="112" y="104" font-size="22" font-weight="600" font-style="italic" font-family="Noto Sans, sans-serif">www.civilcn.com</text>
</svg>

<script>
  // Grid: a heavier line every fifth step, each snapped to a whole pixel
  (function () {
    var out = '', step = 54.38 / 5;
    for (var i = -4; i < 400; i++) {
      var x = Math.round(41 + i * step) + 0.5, y = Math.round(46 + (i - 4) * step) + 0.5;
      out += '<path d="M' + x + ' 0V4000" stroke="' + (i % 5 ? '#1a1b1b' : '#2b2c2c') + '"/>';
      out += '<path d="M0 ' + y + 'H4000" stroke="' + ((i - 4) % 5 ? '#1a1b1b' : '#2b2c2c') + '"/>';
    }
    document.getElementById('grid').innerHTML = out;
  })();
</script>
<script src="https://cdn.jsdelivr.net/npm/bootstrap@5.3.0/dist/js/bootstrap.bundle.min.js"></script>
</body>
</html>
